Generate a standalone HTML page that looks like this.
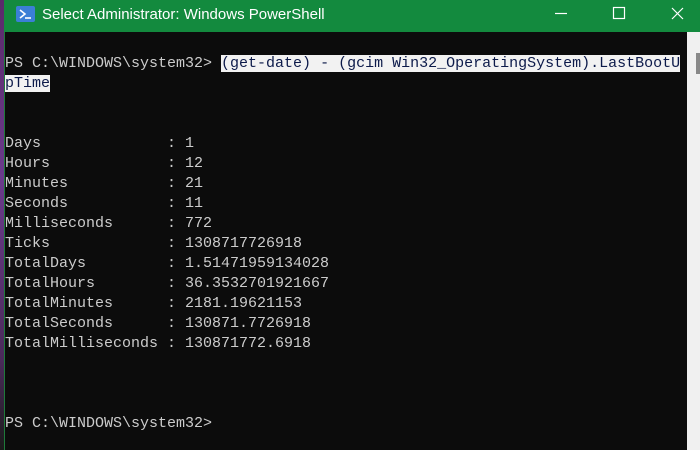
<!DOCTYPE html>
<html><head><meta charset="utf-8"><style>
html,body{margin:0;padding:0;width:700px;height:450px;overflow:hidden;background:#0c0c0c;position:relative;}
.strip{position:absolute;left:0;top:0;width:4px;bottom:0;background:linear-gradient(#5a2a6a,#6b3a8c 40%,#4a2a5a 80%,#1a1a1a);}
.border{position:absolute;left:4px;top:32px;width:1px;height:418px;background:#1f7a3a;}
.title{position:absolute;left:4px;top:0;width:696px;height:32px;background:#138a3e;color:#fff;font:15px "Liberation Sans",sans-serif;}
.title .t{position:absolute;left:38px;top:6px;}
.icon{position:absolute;left:12px;top:6px;width:19px;height:16px;background:#3b7fd6;border-radius:2px;}
.ctl{position:absolute;left:0;top:0;}
.con{position:absolute;left:5px;top:54px;font:15px/20px "Liberation Mono",monospace;color:#cccccc;white-space:pre;}
.sel{background:#f2f2f2;color:#0c1a4a;}
.sb{position:absolute;left:687px;top:32px;width:13px;height:418px;background:#f0f0f0;}
.thumb{position:absolute;left:696px;top:53px;width:4px;height:21px;background:#888;}
</style></head><body>
<div class="strip"></div>
<div class="title">
<div class="icon"><svg width="19" height="16"><path d="M4 4 L9 8 L4 12" stroke="#fff" stroke-width="1.6" fill="none"/><path d="M9 12 H15" stroke="#fff" stroke-width="1.6"/></svg></div>
<div class="t">Select Administrator: Windows PowerShell</div>
<svg class="ctl" width="696" height="32"><path d="M551 13.5 H563" stroke="#fff" stroke-width="1.2"/><rect x="609.5" y="7.5" width="11" height="11" stroke="#fff" stroke-width="1.2" fill="none"/><path d="M668 8 L679 19 M679 8 L668 19" stroke="#fff" stroke-width="1.2"/></svg>
</div>
<div class="border"></div>
<div class="con">PS C:\WINDOWS\system32&gt; <span class="sel">(get-date) - (gcim Win32_OperatingSystem).LastBootU</span>
<span class="sel">pTime</span>


Days              : 1
Hours             : 12
Minutes           : 21
Seconds           : 11
Milliseconds      : 772
Ticks             : 1308717726918
TotalDays         : 1.51471959134028
TotalHours        : 36.3532701921667
TotalMinutes      : 2181.19621153
TotalSeconds      : 130871.7726918
TotalMilliseconds : 130871772.6918



PS C:\WINDOWS\system32&gt;</div>
<div class="sb"></div><div class="thumb"></div>
</body></html>
